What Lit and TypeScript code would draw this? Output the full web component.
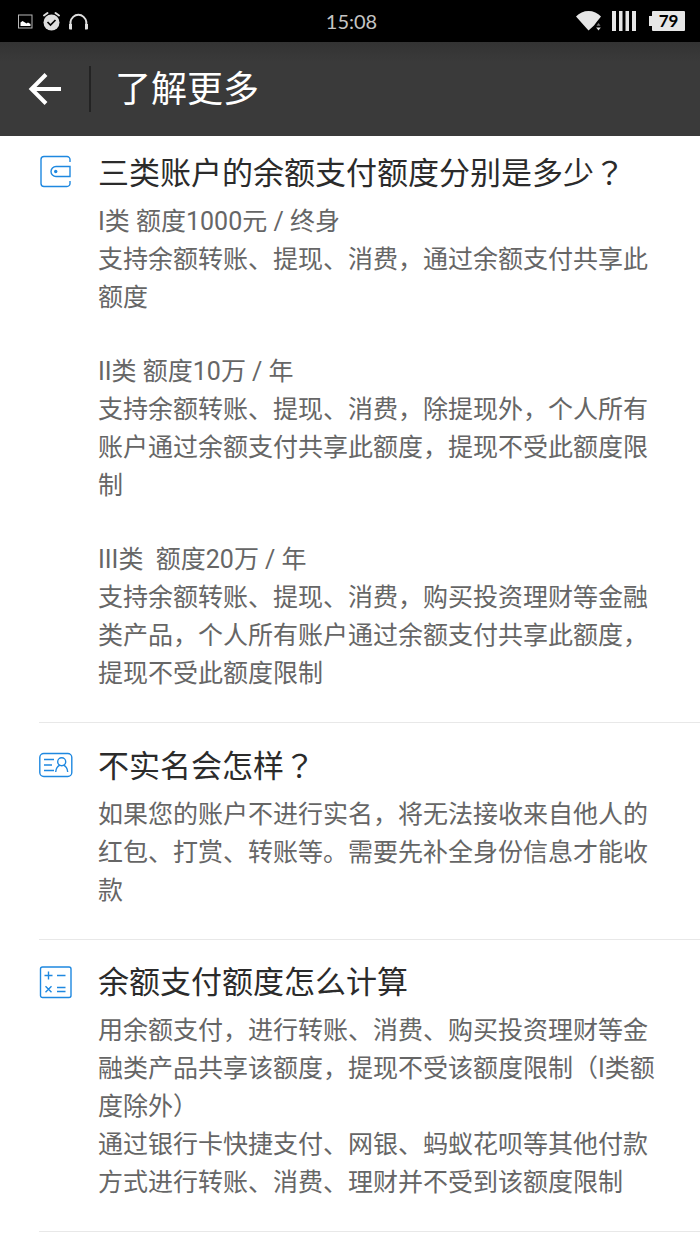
import { LitElement, html, css, svg } from "lit";
import { customElement, property } from "lit/decorators.js";

type IconName = "wallet" | "card" | "calc";

interface Topic {
  icon: IconName;
  title: string;
  question?: boolean;
  groups: string[][];
}

const TOPICS: Topic[] = [
  {
    icon: "wallet",
    title: "三类账户的余额支付额度分别是多少",
    question: true,
    groups: [
      ["I类 额度1000元 / 终身", "支持余额转账、提现、消费，通过余额支付共享此额度"],
      [
        "II类 额度10万 / 年",
        "支持余额转账、提现、消费，除提现外，个人所有账户通过余额支付共享此额度，提现不受此额度限制",
      ],
      [
        "III类\u00a0 额度20万 / 年",
        "支持余额转账、提现、消费，购买投资理财等金融类产品，个人所有账户通过余额支付共享此额度，提现不受此额度限制",
      ],
    ],
  },
  {
    icon: "card",
    title: "不实名会怎样",
    question: true,
    groups: [
      ["如果您的账户不进行实名，将无法接收来自他人的红包、打赏、转账等。需要先补全身份信息才能收款"],
    ],
  },
  {
    icon: "calc",
    title: "余额支付额度怎么计算",
    groups: [
      [
        "用余额支付，进行转账、消费、购买投资理财等金融类产品共享该额度，提现不受该额度限制（I类额度除外）",
        "通过银行卡快捷支付、网银、蚂蚁花呗等其他付款方式进行转账、消费、理财并不受到该额度限制",
      ],
    ],
  },
];

const ICONS = {
  wallet: svg`
    <path d="M31 7V4.500a3 3 0 0 0-3-3H5a3 3 0 0 0-3 3v24a3 3 0 0 0 3 3h23a3 3 0 0 0 3-3V26" />
    <path d="M31 11.500H17a5 5 0 0 0 0 10h14z" />
    <circle cx="16.700" cy="16.500" r="1.700" fill="currentColor" stroke="none" />`,
  card: svg`
    <rect x=".8" y="5.500" width="32" height="23" rx="4" />
    <path d="M5 11.500h10M5 17h8M5 22.500h10" />
    <circle cx="22.700" cy="13.700" r="4" />
    <path d="M16.700 24c.3-3.600 2.300-6 4.300-6.800M28.700 24c-.3-3.600-2.300-6-4.300-6.800" />`,
  calc: svg`
    <rect x="1.500" y="2" width="30.500" height="30.500" rx="2" />
    <path d="M5.500 10.500h8M9.500 6.500v8M18 10.500h8.500M6.500 21.300l6 6M12.500 21.300l-6 6M18 22.500h8.500M18 26.500h8.500" />`,
};

@customElement("status-bar")
class StatusBar extends LitElement {
  static styles = css`
    :host {
      display: grid;
      grid-template-columns: 1fr auto 1fr;
      align-items: center;
      height: 42px;
      padding: 0 15px 0 18px;
      background: #000;
      color: #dedede;
      font-family: Lato, "Liberation Sans", sans-serif;
    }
    svg {
      display: block;
    }
    .left,
    .right {
      display: flex;
      align-items: center;
    }
    .left {
      gap: 8px;
    }
    .right {
      justify-content: flex-end;
      gap: 10px;
    }
    .time {
      font-size: 20px;
      line-height: 42px;
      color: #c4c4c4;
    }
    .battery {
      display: flex;
      align-items: center;
      margin-left: 3px;
    }
    .tip {
      width: 3px;
      height: 10px;
      background: #e6e6e6;
    }
    .level {
      width: 33px;
      border-radius: 1px;
      background: #e6e6e6;
      color: #000;
      font-size: 17px;
      font-weight: 700;
      line-height: 20px;
      text-align: center;
    }
  `;

  render() {
    return html`
      <div class="left">
        <svg width="15" height="20" viewBox="0 0 15 20" aria-hidden="true">
          <rect x=".5" y="4" width="13.500" height="13" fill="none" stroke="#b8b8b8" />
          <path d="M2.500 15v-3.500l2-1.500 2.500 1.500 1.500 1 1.500-1 2.500 1.500v2z" fill="#fff" />
        </svg>
        <svg width="20" height="20" viewBox="0 0 20 20" aria-hidden="true">
          <circle cx="10.500" cy="11.500" r="8" fill="currentColor" />
          <path d="M3 4.500l3.500-2.500M18 4.500l-3.500-2.500" stroke="currentColor" stroke-width="2" stroke-linecap="round" />
          <path d="M6.500 11l3 3 5-5" fill="none" stroke="#000" stroke-width="1.700" />
        </svg>
        <svg width="21" height="20" viewBox="0 0 21 20" aria-hidden="true">
          <path d="M1.500 14v-3a8 8.500 0 0 1 15.800 0V14" fill="none" stroke="currentColor" stroke-width="2" />
          <path d="M0 13h3v5.500H1a1 1 0 0 1-1-1zM16 13h3v4.500a1 1 0 0 1-1 1h-2z" fill="currentColor" />
        </svg>
      </div>
      <time class="time">15:08</time>
      <div class="right">
        <svg width="26" height="20" viewBox="0 0 26 20" aria-hidden="true">
          <path d="M0 5.500a17 17 0 0 1 25 0l-4 5-3 4-5.500 5z" fill="#e6e6e6" />
          <path d="M22.500 9.500l3.500 4.500h-7z" fill="#000" />
          <path d="M22.500 12l2 2.700h-4z" fill="#777" />
          <path d="M22.500 19.500l2.300-3h-4.600z" fill="#e6e6e6" />
        </svg>
        <svg width="24" height="20" viewBox="0 0 24 20" aria-hidden="true">
          <path d="M0 0h4v20H0zM7 0h3.500v20H7zM13.500 0h3.500v20h-3.500zM20 0h4v20h-4z" fill="#e6e6e6" />
        </svg>
        <div class="battery"><span class="tip"></span><span class="level">79</span></div>
      </div>
    `;
  }
}

@customElement("topic-section")
class TopicSection extends LitElement {
  @property({ attribute: false }) topic!: Topic;

  static styles = css`
    :host {
      display: block;
    }
    .topic {
      display: grid;
      grid-template-columns: 34px minmax(0, 1fr);
      column-gap: 25px;
      align-items: start;
      padding-right: 34px;
    }
    .icon {
      display: block;
      color: #1e88e0;
      fill: none;
      stroke: currentColor;
      stroke-width: 1.4;
    }
    .title {
      margin: 0 0 11px;
      font-size: 31px;
      font-weight: 400;
      line-height: 36px;
      color: #2b2b2b;
    }
    .mark {
      font-family: "Noto Sans CJK TC", sans-serif;
      line-height: 1;
    }
    .groups {
      display: flex;
      flex-direction: column;
      gap: 36px;
      font-size: 25px;
      line-height: 38px;
      color: #666;
    }
    .line {
      margin: 0;
    }
  `;

  render() {
    const t = this.topic;
    return html`
      <section class="topic">
        <svg class="icon" width="34" height="34" viewBox="0 0 34 34" aria-hidden="true">${ICONS[t.icon]}</svg>
        <div>
          <h2 class="title">${t.title}${t.question ? html`<span class="mark">？</span>` : ""}</h2>
          <div class="groups">
            ${t.groups.map((g) => html`<div>${g.map((line) => html`<p class="line">${line}</p>`)}</div>`)}
          </div>
        </div>
      </section>
    `;
  }
}

@customElement("app-root")
class AppRoot extends LitElement {
  static styles = css`
    :host {
      display: block;
      min-height: 100vh;
      background: #fff;
      font-family: Roboto, "Noto Sans CJK SC", sans-serif;
    }
    .bar {
      display: flex;
      align-items: center;
      height: 94px;
      padding-left: 28px;
      background: linear-gradient(#333, #3a3a3a 20px);
    }
    .back {
      display: block;
      padding: 0;
      border: 0;
      background: none;
      color: #fff;
      cursor: pointer;
    }
    .back svg {
      display: block;
    }
    .rule {
      width: 2px;
      height: 46px;
      margin: 0 24px 0 27px;
      background: #232323;
    }
    .heading {
      margin: 0;
      padding-top: 2px;
      font-size: 36px;
      font-weight: 400;
      line-height: 46px;
      color: #fff;
    }
    .list {
      padding: 19px 0 0 39px;
    }
    .item {
      display: block;
      margin-bottom: 25px;
      padding-bottom: 29px;
      border-bottom: 1px solid #e8e8e8;
    }
    .item:last-child {
      margin-bottom: 0;
    }
  `;

  render() {
    return html`
      <status-bar></status-bar>
      <header class="bar">
        <button class="back" aria-label="返回">
          <svg width="34" height="34" viewBox="0 0 34 34" fill="none" stroke="currentColor" stroke-width="4">
            <path d="M33 17H4M18 2.500L3.500 17 18 31.500" />
          </svg>
        </button>
        <span class="rule"></span>
        <h1 class="heading">了解更多</h1>
      </header>
      <main class="list">
        ${TOPICS.map((t) => html`<topic-section class="item" .topic=${t}></topic-section>`)}
      </main>
    `;
  }
}
